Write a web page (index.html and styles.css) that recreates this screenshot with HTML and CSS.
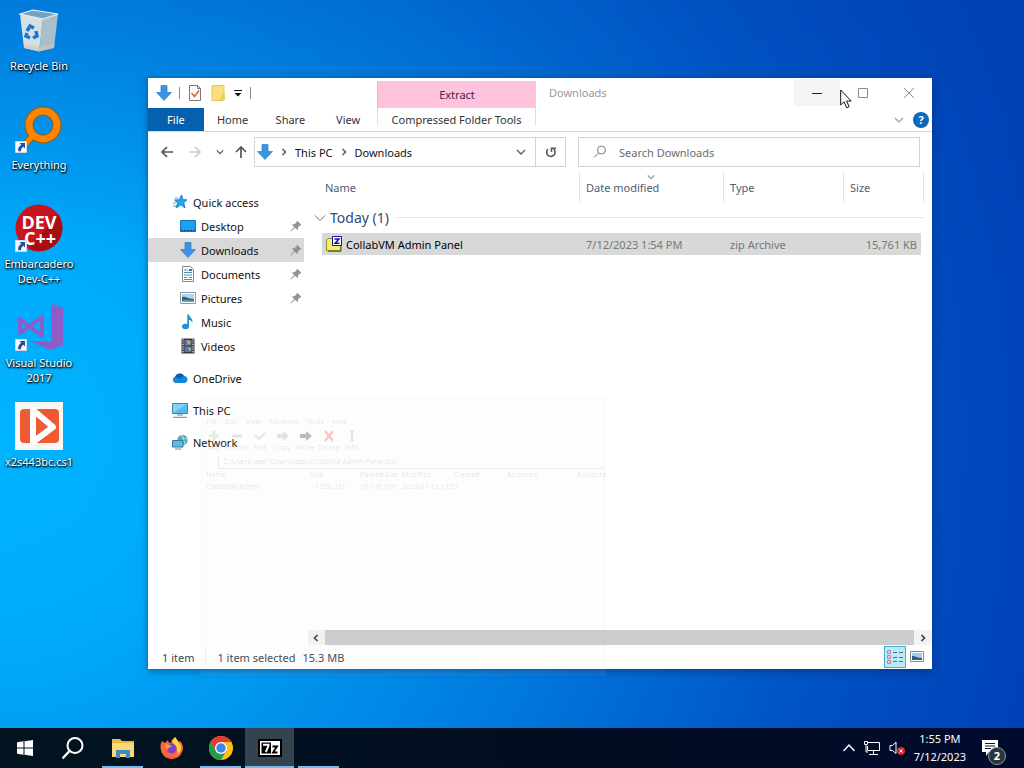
FILE: index.html
```html
<!DOCTYPE html>
<html lang="en">
<head>
<meta charset="utf-8">
<meta name="viewport" content="width=device-width, initial-scale=1">
<title>Downloads</title>
<link rel="stylesheet" href="styles.css">
</head>
<body>
<svg class="sprite" aria-hidden="true">
  <symbol id="arrow-down" viewBox="0 0 16 16"><path d="M5 .5h6v7h4.500L8 15.500.500 7.500H5z" fill="#3b94e3" stroke="#2a7dc8" stroke-width=".7"/></symbol>
  <symbol id="pin" viewBox="0 0 12 12"><path d="M7 .5 11.500 5l-1.500.5-2 2-.2 2.800L5 7.800.8 11.500l-.4-.4L4.200 7 1.700 4.500l2.800-.3 2-2z" fill="#8d9499"/></symbol>
  <symbol id="picture" viewBox="0 0 16 12"><path d="M.5.5h15v11H.5z" fill="#fff" stroke="#8c9aa5"/><path d="M2 2h12v8H2z" fill="#aed5ef"/><path d="M2 5c4-1 5 2 12 2v3H2z" fill="#33627a"/><path d="M2 8.500c4-1 8 0 12 0V10H2z" fill="#6f9fb8"/></symbol>
  <symbol id="shortcut" viewBox="0 0 12 12"><path d="M.5.5h11v11H.5z" fill="#f7f9fc" stroke="#cfd8e2"/><path d="M4.500 2h5.500v5.500L8.300 5.800C6.500 7 6 8.200 6 10.300H3.200C2.700 7.500 4 5.300 6.300 3.800z" fill="#244f9c"/></symbol>
  <symbol id="chev-down" viewBox="0 0 10 10"><path d="M1 3l4 4 4-4" fill="none" stroke="currentColor" stroke-width="1.500"/></symbol>
  <symbol id="chev-right" viewBox="0 0 10 10"><path d="M3.500 2 6.500 5 3.500 8" fill="none" stroke="currentColor" stroke-width="1.700"/></symbol>
  <symbol id="arrow-left" viewBox="0 0 14 14"><path d="M13 7H2M7 2 2 7l5 5" fill="none" stroke="currentColor" stroke-width="1.700"/></symbol>
</svg>

<main class="desktop">
  <nav class="shortcuts" aria-label="Desktop">
    <a class="shortcut" href="#">
      <svg class="shortcut-icon" viewBox="0 0 48 48"><path d="m5 8 23 5-4 32.500L9 42z" fill="#d8dfe3"/><path d="m28 13 15-5-4 34-15 3.500z" fill="#a9bfcc"/><path d="m5 8 13-4 25 4-15 5z" fill="#6fa3bf" stroke="#eaf3f7" stroke-width="1.200"/><path d="m9 38 .3 4L24 45.500l15-3.500.4-4L25 41z" fill="#cfc8c0" opacity=".6"/><g fill="none" stroke="#1f78cf" stroke-width="3.500"><path d="m12 25 3-5 4 2M21 25l1 5-4 2M15 32l-4-2 1-3"/></g></svg>
      <span>Recycle Bin</span></a>
    <a class="shortcut" href="#">
      <svg class="shortcut-icon" viewBox="0 0 48 48"><path d="M19 29 8 42" stroke="#8f5a1d" stroke-width="7"/><circle cx="28" cy="20" r="14" fill="none" stroke="#8f5a1d" stroke-width="9"/><path d="M20 28 8 42" stroke="#ff8500" stroke-width="5"/><circle cx="28" cy="20" r="14" fill="none" stroke="#ff8500" stroke-width="7"/><use href="#shortcut" x="0" y="36" width="12" height="12"/></svg>
      <span>Everything</span></a>
    <a class="shortcut" href="#">
      <svg class="shortcut-icon" viewBox="0 0 48 48"><circle cx="24" cy="24" r="23.500" fill="#c8141c"/><path d="M43 10a23.500 23.500 0 0 1-29 35z" fill="#a80d14"/><g class="dev-text"><text x="24" y="25" text-anchor="middle">DEV</text><text x="25" y="41" text-anchor="middle">C++</text></g><use href="#shortcut" x="0" y="36" width="12" height="12"/></svg>
      <span>Embarcadero Dev-C++</span></a>
    <a class="shortcut" href="#">
      <svg class="shortcut-icon" viewBox="0 0 48 48"><path d="m36 1 12 4v37l-12 5-22-9 22 1z" fill="#8e5bc8"/><path d="M5 16v14L27 14v19z" fill="none" stroke="#8e5bc8" stroke-width="4" stroke-linejoin="round"/><use href="#shortcut" x="0" y="36" width="12" height="12"/></svg>
      <span>Visual Studio 2017</span></a>
    <a class="shortcut" href="#">
      <svg class="shortcut-icon" viewBox="0 0 48 48"><path d="M0 0h48v48H0z" fill="#f8f7f5"/><rect x="5" y="7" width="39" height="34" rx="4" fill="#ee5a34"/><path d="M18 8v32L38 25z" fill="#ee5a34" stroke="#fff" stroke-width="6" stroke-linejoin="round"/></svg>
      <span>x2s443bc.cs1</span></a>
  </nav>

  <section class="window" aria-label="Downloads">
    <header class="ribbon">
      <div class="quick-tools">
        <svg class="i16"><use href="#arrow-down"/></svg><i class="rule"></i>
        <button class="plain" aria-label="Properties"><svg class="i16" viewBox="0 0 16 16"><path d="M2.500.500h8l3 3v12h-11z" fill="#fbfbfb" stroke="#777"/><path d="M10.500.500v3h3" fill="none" stroke="#777"/><path d="m4.500 8 3 3.500 4.500-6" fill="none" stroke="#dd6540" stroke-width="1.600"/></svg></button>
        <button class="plain" aria-label="New folder"><svg class="i16" viewBox="0 0 16 16"><path d="M2 .5h12v12l-1 3H2z" fill="#fbdf7c" stroke="#e8c65d"/><path d="M12 9h3v6h-5z" fill="#f1cc5c"/></svg></button>
        <button class="plain" aria-label="Customize toolbar"><svg class="i10" viewBox="0 0 10 10"><path d="M1 2.500h8" stroke="#111"/><path d="M1.500 5h7L5 8.500z" fill="#111"/></svg></button><i class="rule"></i>
      </div>
      <div class="context-title">Extract</div>
      <div class="caption"><h1>Downloads</h1>
        <button class="caption-button hovered" aria-label="Minimize"><svg class="i12" viewBox="0 0 12 12"><path d="M1 6.500h10" stroke="#222"/></svg></button>
        <button class="caption-button" aria-label="Maximize"><svg class="i12" viewBox="0 0 12 12"><path d="M1.500 1.500h9v9h-9z" fill="none" stroke="#8b8b8b"/></svg></button>
        <button class="caption-button" aria-label="Close"><svg class="i12" viewBox="0 0 12 12"><path d="m1 1 10 10M11 1 1 11" stroke="#8b8b8b"/></svg></button>
      </div>
      <div class="tabs"><button class="tab file">File</button><button class="tab">Home</button><button class="tab">Share</button><button class="tab">View</button></div>
      <button class="tab context-tab">Compressed Folder Tools</button>
      <div class="ribbon-end">
        <button class="plain faint" aria-label="Expand the ribbon"><svg class="i10"><use href="#chev-down"/></svg></button>
        <button class="plain help" aria-label="Help">?</button>
      </div>
    </header>

    <div class="navbar">
      <div class="history">
        <button class="plain" aria-label="Back"><svg class="i14"><use href="#arrow-left"/></svg></button>
        <button class="plain flip disabled" aria-label="Forward"><svg class="i14"><use href="#arrow-left"/></svg></button>
        <button class="plain" aria-label="Recent locations"><svg class="i8"><use href="#chev-down"/></svg></button>
        <button class="plain up" aria-label="Up"><svg class="i14"><use href="#arrow-left"/></svg></button>
      </div>
      <div class="address">
        <svg class="i16"><use href="#arrow-down"/></svg>
        <svg class="i10"><use href="#chev-right"/></svg><a href="#">This PC</a>
        <svg class="i10"><use href="#chev-right"/></svg><a href="#">Downloads</a>
        <button class="plain drop" aria-label="Previous locations"><svg class="i10"><use href="#chev-down"/></svg></button>
        <button class="plain refresh" aria-label="Refresh"><svg class="i12" viewBox="0 0 12 12"><path d="M3 3.200A4.200 4.200 0 1 0 8.500 3M6.500 6V2.300H11" fill="none" stroke="currentColor" stroke-width="1.600"/></svg></button>
      </div>
      <label class="search"><svg class="i14" viewBox="0 0 14 14"><circle cx="8.500" cy="5" r="4" fill="none" stroke="#777"/><path d="M5.500 8 1 12.500" stroke="#777"/></svg><input type="search" placeholder="Search Downloads" aria-label="Search Downloads"></label>
    </div>

    <div class="body">
      <nav class="tree" aria-label="Folders">
        <div class="branch">
          <a class="node root" href="#"><svg class="i16" viewBox="0 0 16 16"><path d="m9.500 1 1.600 4.800H15l-3.300 2.900L13 14 8.900 10.800 4 14l1.700-5L2.500 6l4.800-.2z" fill="#2ea3ee" stroke="#1686cf"/><path d="M3 4h3M1 9h3M1 12h3" stroke="#55a9dc"/></svg>Quick access</a>
          <a class="node" href="#"><svg class="i16" viewBox="0 0 16 16"><path d="M.5 2.500h15v11H.5z" fill="#18a0f4" stroke="#1476b9"/><path d="M1 12.500h14" stroke="#0a4c7f" stroke-dasharray="2 1"/></svg>Desktop<svg class="pin"><use href="#pin"/></svg></a>
          <a class="node current" href="#"><svg class="i16"><use href="#arrow-down"/></svg>Downloads<svg class="pin"><use href="#pin"/></svg></a>
          <a class="node" href="#"><svg class="i16" viewBox="0 0 16 16"><path d="M2.500.500h8l3 3v12h-11z" fill="#fff" stroke="#7c8a92"/><path d="M4 4h4M4 6.500h8M4 9h8M4 11.500h3M9 11.500h3M4 13.500h8" stroke="#4795a8"/><path d="M9 4h3" stroke="#2e6f9c" stroke-width="2"/></svg>Documents<svg class="pin"><use href="#pin"/></svg></a>
          <a class="node" href="#"><svg class="i16"><use href="#picture"/></svg>Pictures<svg class="pin"><use href="#pin"/></svg></a>
          <a class="node" href="#"><svg class="i16" viewBox="0 0 16 16"><ellipse cx="5.500" cy="12.500" rx="3.500" ry="2.800" fill="#1e93d2"/><path d="M7.300.5H9c.3 3 4.500 4 3.200 8.500C11.500 6.500 10 6 9 6v6.500H7.300z" fill="#1e93d2"/></svg>Music</a>
          <a class="node" href="#"><svg class="i16" viewBox="0 0 16 16"><path d="M1.500.5h13v15h-13z" fill="#333b45"/><path d="M3 1v14M13 1v14" stroke="#e4e8ea" stroke-width="1.300" stroke-dasharray="1.200 1.200"/><path d="M4.500 2h7v5.500h-7z" fill="#6a70a8"/><path d="M4.500 8.500h7V14h-7z" fill="#5c70ae"/><path d="m7 2 4 2-3 3zM8 9l3.500 2-2 2z" fill="#c2c33d"/></svg>Videos</a>
        </div>
        <a class="node root" href="#"><svg class="i16" viewBox="0 0 16 16"><path d="M3.500 13A3.200 3.200 0 0 1 3 6.800 5 5 0 0 1 12 6a3.600 3.600 0 0 1 1 7z" fill="#1288dc"/><path d="M3 6.800A5 5 0 0 1 12 6L7.500 9z" fill="#0b5fae"/></svg>OneDrive</a>
        <a class="node root" href="#"><svg class="i16" viewBox="0 0 16 16"><path d="M.5 1.500h15v10H.5z" fill="#52bdf0" stroke="#477f9e"/><path d="m1 2h14L1 11z" fill="#82d4f7"/><path d="M5 13h6M1 15.300h14" stroke="#6e8591"/></svg>This PC</a>
        <a class="node root" href="#"><svg class="i16" viewBox="0 0 16 16"><circle cx="10.500" cy="6" r="5.200" fill="#5aa5c6"/><path d="M9 1c2 2 2 4 6 4M10 1l3 9" stroke="#b8e4d5" fill="none"/><path d="M.5 6.500h10.500v6.500H.5z" fill="#56bdec" stroke="#3d7795"/><path d="M3 15h6" stroke="#6e8591"/></svg>Network</a>
      </nav>

      <div class="content">
        <table class="files">
          <colgroup><col class="c-name"><col class="c-date"><col class="c-type"><col></colgroup>
          <thead><tr><th scope="col">Name</th><th scope="col" class="sorted">Date modified<svg class="sort-mark i8"><use href="#chev-down"/></svg></th><th scope="col">Type</th><th scope="col">Size</th></tr></thead>
          <tbody>
            <tr><th class="group" colspan="4" scope="rowgroup"><div class="group-line"><svg class="i12" viewBox="0 0 12 12"><path d="m1 3.500 5 5 5-5" fill="none" stroke="#666"/></svg>Today (1)</div></th></tr>
            <tr class="selected"><td><div class="file-name"><svg class="i16" viewBox="0 0 16 16"><path d="M.5 4.500 2 2.500h5v2h7.500v10H.5z" fill="#f3f16a" stroke="#8d8d2c"/><path d="M2 15.300h13V5" fill="none" stroke="#555"/><path d="M6.500.500h9v9h-9z" fill="#fff" stroke="#1414a0"/><path d="M8.500 3h4.500L9 7.300h4.500" fill="none" stroke="#1414a0" stroke-width="1.500"/></svg>CollabVM Admin Panel</div></td><td>7/12/2023 1:54 PM</td><td>zip Archive</td><td>15,761 KB</td></tr>
          </tbody>
        </table>
        <div class="scrollbar"><button class="plain flip" aria-label="Scroll left"><svg class="i10"><use href="#chev-right"/></svg></button><div class="thumb"></div><button class="plain" aria-label="Scroll right"><svg class="i10"><use href="#chev-right"/></svg></button></div>
      </div>
    </div>

    <footer class="status"><span class="count">1 item</span><span>1 item selected</span><span class="bytes">15.3 MB</span>
      <button class="view chosen" aria-label="Details view"><svg class="i16" viewBox="0 0 16 16"><path d="M.5 1.500h3v3h-3zM.5 6.500h3v3h-3zM.5 11.500h3v3h-3z" fill="#fff" stroke="#a58ba5"/><path d="M1.500 3h1M1.500 8h1M1.500 13h1" stroke="#c33"/><path d="M6 3.500h4M12 3.500h4M6 8.500h4M12 8.500h4M6 12.500h4M12 12.500h4" stroke="#667"/></svg></button>
      <button class="view" aria-label="Large icons view"><svg class="i14" viewBox="0 0 14 12"><path d="M.5.5h13v10H.5z" fill="#fff" stroke="#7d8a94"/><path d="M2 2h10v7H2z" fill="#9ccdec"/><path d="M2 5c4 0 5 2 10 2v2H2z" fill="#2f5f78"/></svg></button>
    </footer>
  </section>

  <section class="fading" aria-label="Archive">
    <div class="fading-menu"><span>File</span><span>Edit</span><span>View</span><span>Favorites</span><span>Tools</span><span>Help</span></div>
    <div class="fading-tools">
      <span><svg class="i12" viewBox="0 0 12 12"><path d="M6 1v10M1 6h10" stroke="#2b9b2b" stroke-width="3"/></svg>Add</span>
      <span><svg class="i12" viewBox="0 0 12 12"><path d="M1 6h10" stroke="#347" stroke-width="3"/></svg>Extract</span>
      <span><svg class="i12" viewBox="0 0 12 12"><path d="m1 5 4 4 6-6" fill="none" stroke="#276" stroke-width="2"/></svg>Test</span>
      <span><svg class="i12" viewBox="0 0 12 12"><path d="M0 4h6V1l6 5-6 5V8H0z" fill="#333"/></svg>Copy</span>
      <span><svg class="i12 mid" viewBox="0 0 12 12"><path d="M0 4h6V1l6 5-6 5V8H0z"/></svg>Move</span>
      <span><svg class="i12 strong" viewBox="0 0 12 12"><path d="m2 1 8 10M10 1 2 11" stroke="#f22" stroke-width="2.500"/></svg>Delete</span>
      <span><svg class="i12" viewBox="0 0 12 12"><path d="M4 1.500h4M4 10.500h4M6 2v8" stroke="#433" stroke-width="2"/></svg>Info</span>
    </div>
    <div class="fading-path">C:\Users\user\Downloads\CollabVM Admin Panel.zip\</div>
    <div class="fading-row"><span>Name</span><span>Size</span><span>Packed Size</span><span>Modified</span><span>Created</span><span>Accessed</span><span>Attribute</span></div>
    <div class="fading-row"><span>CollabVM Admin</span><span>17 250 231</span><span>16 139 109</span><span>2023-07-12 13:51</span></div>
  </section>
</main>

<footer class="taskbar">
  <button class="task" aria-label="Start"><svg class="i16" viewBox="0 0 16 16"><path d="M0 2.200 6.500 1.300V7.500H0zM7.500 1.200 16 0v7.500H7.500zM0 8.500h6.500v6.200L0 13.800zM7.500 8.500H16V16l-8.500-1.200z" fill="#fff"/></svg></button>
  <button class="task" aria-label="Search"><svg class="i24" viewBox="0 0 24 24"><circle cx="13" cy="9.500" r="7.500" fill="none" stroke="#fff" stroke-width="2"/><path d="m7.500 15-7 7.500" stroke="#fff" stroke-width="2.300"/></svg></button>
  <button class="task open" aria-label="File Explorer"><svg class="i24" viewBox="0 0 24 24"><path d="M1 3h8l2 2h12v16H1z" fill="#e9b94b"/><path d="M1 7h22v14H1z" fill="#fbd874"/><path d="M5 14h14v8h-4v-4H9v4H5z" fill="#3a8cc8"/></svg></button>
  <button class="task" aria-label="Firefox"><svg class="i24" viewBox="0 0 24 24"><path d="M2 5c1 1 2 1 3 2l3-3c0 2 1 3 3 3l1-3 3-3c2 2 3 4 4 5l1-1c3 3 4 7 2 11a11 11 0 0 1-20 1C0 13 0 8 2 5z" fill="#ff6636"/><path d="m15 1 4 6c4 4 2 9-2 12 2-8-4-11-5-14z" fill="#ffd33c"/><path d="M2 12c2 11 14 12 19 6-5 7-17 5-19-6z" fill="#ed2667"/><circle cx="11.500" cy="12.500" r="5" fill="#7a3ed8"/><path d="M5 9c3-1 5 0 7 1-2 2-4 1-4 4-2-1-3-2-3-5z" fill="#ff9b2c"/></svg></button>
  <button class="task open" aria-label="Chrome"><svg class="i24" viewBox="0 0 24 24"><circle cx="12" cy="12" r="12" fill="#fbc116"/><path d="M1.600 6A12 12 0 0 1 22.400 6H12L6.800 15z" fill="#e33b2e"/><path d="M1.600 6A12 12 0 0 0 12 24l5.200-9H6.800z" fill="#229b4a"/><circle cx="12" cy="12" r="6" fill="#fff"/><circle cx="12" cy="12" r="4.700" fill="#3f83ee"/></svg></button>
  <button class="task open active" aria-label="7-Zip"><svg class="i24" viewBox="0 0 24 24"><path d="M0 3h24v18H0z" fill="#000"/><path d="M2 5h20v14H2z" fill="#fff"/><path d="M3.500 6.500H13v11H3.500z" fill="#000"/><path d="M5 8.800h5.500v1L7.800 16" fill="none" stroke="#fff" stroke-width="2"/><path d="M14.500 10.500h4.500l-4 6h4.500" fill="none" stroke="#000" stroke-width="1.800"/></svg></button>
  <button class="task open" aria-label="Window"></button>
  <div class="tray">
    <button class="plain" aria-label="Show hidden icons"><svg class="i12" viewBox="0 0 12 12"><path d="m.5 9 5.500-6 5.500 6" fill="none" stroke="#fff" stroke-width="1.500"/></svg></button>
    <svg class="i16" viewBox="0 0 16 16"><path d="M4 2.500h11.500v8H3.500V6M9.500 11v3M5 14.500h9M.5 1.500h3v3h-3zM2 5v7h2" fill="none" stroke="#fff"/></svg>
    <svg class="i16" viewBox="0 0 16 16"><path d="M1 5.500h2.500L7 2v11.500L3.500 10.500H1z" fill="none" stroke="#fff"/><circle cx="12" cy="11" r="4" fill="#d8292f"/><path d="m10.500 9.500 3 3M13.500 9.500l-3 3" stroke="#fff"/></svg>
    <time class="clock"><span>1:55 PM</span><span>7/12/2023</span></time>
    <button class="notes" aria-label="Notifications"><svg class="i16" viewBox="0 0 16 16"><path d="M0 0h16v12H7l-3 4v-4H0z" fill="#fff"/><path d="M3 3.500h10M3 6h10M3 8.500h6" stroke="#0a1533"/></svg><span class="badge">2</span></button>
  </div>
</footer>
<svg class="pointer" viewBox="0 0 12 20" aria-hidden="true"><path d="M.7 1v15l3.400-3.200 2.600 6 2.500-1.100-2.600-5.700h4.600z" fill="#fff" stroke="#111"/></svg>
</body>
</html>
```
FILE: styles.css
```css
* { box-sizing: border-box; }
body {
  margin: 0;
  min-height: 100vh;
  display: grid;
  grid-template-rows: 1fr 40px;
  overflow: hidden;
  font: 11px/15px "Noto Sans", "Open Sans", sans-serif;
  color: #111;
}
a { color: inherit; text-decoration: none; }
button, input { font: inherit; color: inherit; }
button { border: 0; padding: 0; background: none; display: flex; align-items: center; justify-content: center; }
svg { flex: none; }
.sprite { position: absolute; width: 0; height: 0; }
.i8 { width: 8px; height: 8px; }
.i10 { width: 10px; height: 10px; }
.i12 { width: 12px; height: 12px; }
.i14 { width: 14px; height: 14px; }
.i16 { width: 16px; height: 16px; }
.i24 { width: 24px; height: 24px; }

.desktop {
  position: relative;
  background:
    linear-gradient(to bottom, rgba(0, 70, 180, .25), rgba(0, 70, 180, 0) 35%),
    radial-gradient(ellipse 105% 150% at 0 60%, #00b4ff 0, #00a9fa 20%, #0081e2 48%, #0055c6 76%, #003fb6 100%);
}
.shortcuts { display: grid; grid-auto-rows: 99px; width: 78px; padding-top: 6px; }
.shortcut {
  display: flex; flex-direction: column; align-items: center; gap: 4px;
  color: #fff; text-align: center;
  text-shadow: 1px 1px 2px #000, 0 1px 2px #000;
}
.shortcut-icon { width: 48px; height: 48px; }
.dev-text { font: bold 18px "Open Sans", sans-serif; fill: #fff; text-shadow: none; }

.window {
  position: absolute;
  inset: 78px 92px 59px 148px;
  display: grid;
  grid-template-rows: auto auto 1fr 24px;
  background: #fff;
  box-shadow: 0 0 1px #0a5a9c, 0 2px 8px rgba(0, 20, 60, .4);
}
.ribbon {
  display: grid;
  grid-template-columns: 229px 159px 1fr;
  grid-template-rows: 30px 23px;
  border-bottom: 1px solid #d9dadb;
}
.quick-tools { display: flex; align-items: center; padding-left: 8px; gap: 7px; }
.rule { width: 1px; height: 12px; background: #888; }
.plain { flex: none; }
.context-title { margin-top: 3px; background: #ffc2dc; display: grid; place-items: center; border-left: 1px solid #eab6cc; color: #4c2438; }
.caption { display: flex; align-items: flex-start; }
.caption h1 { flex: 1; margin: 0; padding: 7px 0 0 13px; font-size: 11px; font-weight: 400; color: #999; }
.caption-button { width: 46px; height: 27px; margin-top: 1px; }
.caption-button.hovered { background: #f4f4f4; }
.tabs { display: flex; }
.tab { width: 58px; color: #333; }
.tab.file { width: 56px; background: #0561b0; color: #fff; }
.context-tab { width: 100%; border: solid #ddd; border-width: 0 1px; margin-bottom: 6px; padding-top: 6px; }
.ribbon-end { display: flex; align-items: center; justify-content: flex-end; gap: 9px; padding-right: 3px; }
.faint { color: #aaa; }
.help { width: 16px; height: 16px; border-radius: 8px; background: #0b69b7; color: #fff; font-weight: 700; }

.navbar { display: grid; grid-template-columns: 106px minmax(0, 312px) minmax(0, 1fr); height: 40px; padding: 5px 12px 5px 0; }
.history { display: flex; align-items: center; gap: 14px; padding-left: 12px; color: #555; }
.history .up { transform: rotate(90deg); margin-left: -4px; }
.flip { transform: scaleX(-1); }
.disabled { color: #ccc; }
.address { display: flex; align-items: center; border: 1px solid #d5d5d5; padding-left: 2px; gap: 6px; color: #111; }
.address > svg + svg, .address a + svg { color: #666; }
.drop { margin-left: auto; margin-right: 3px; color: #666; }
.refresh { width: 30px; height: 100%; border-left: 1px solid #d5d5d5; color: #555; }
.search { display: flex; align-items: center; gap: 12px; margin-left: 12px; padding-left: 14px; border: 1px solid #d5d5d5; }
.search input { flex: 1; min-width: 0; border: 0; outline: 0; padding: 0; background: none; }
.search input::placeholder { color: #6b6b6b; opacity: 1; }

.body { display: grid; grid-template-columns: 160px minmax(0, 1fr); }
.tree { display: flex; flex-direction: column; gap: 8px; padding: 18px 4px 0 0; }
.node { display: flex; align-items: center; height: 24px; gap: 5px; padding: 0 2px 0 32px; }
.node.root { padding-left: 24px; }
.node.current { background: #d9d9d9; }
.pin { width: 12px; height: 12px; margin-left: auto; }
.content { display: flex; flex-direction: column; justify-content: space-between; }
.files { table-layout: fixed; width: calc(100% - 8px); border-spacing: 0; color: #777; }
.c-name { width: 272px; }
.c-date { width: 144px; }
.c-type { width: 120px; }
.files th { text-align: left; font-weight: 400; padding: 0 6px; color: #4f5d70; }
.files thead th { height: 30px; border-right: 1px solid #e5e5e5; }
.files thead th:first-child { padding-left: 17px; }
.sorted { position: relative; }
.sort-mark { position: absolute; top: 1px; left: 67px; color: #8a93a0; }
.files .group { height: 31px; color: #34487c; font-size: 14px; line-height: 20px; padding-right: 0; }
.group-line { display: flex; align-items: center; gap: 4px; }
.group-line::after { content: ""; flex: 1; height: 1px; margin-left: 4px; background: #e2e2e2; }
.selected td { height: 22px; padding: 0 6px; background: #d8d8d8 padding-box; }
.selected td:first-child { border-left: 14px solid transparent; padding-left: 4px; color: #000; }
.selected td:last-child { border-right: 3px solid transparent; padding-right: 4px; text-align: right; }
.file-name { display: flex; align-items: center; gap: 4px; }
.scrollbar { display: flex; align-items: center; height: 15px; gap: 4px; padding: 0 4px 0 3px; background: #f3f3f3; color: #444; }
.thumb { flex: 1; height: 15px; background: #cdcdcd; }

.status { display: flex; align-items: center; padding-left: 14px; color: #3b4656; }
.count { padding-right: 11px; margin-right: 11px; border-right: 1px solid #eee; }
.bytes { margin-left: 7px; margin-right: auto; }
.view { width: 22px; height: 22px; }
.view:last-child { margin-right: 4px; }
.view.chosen { background: #b9eaf7; border: 1px solid #49acc8; }

.fading {
  position: absolute;
  inset: 396px 419px 52px 201px;
  pointer-events: none;
  background: rgba(225, 228, 228, .06);
  border: 1px solid rgba(120, 120, 120, .04);
  padding-top: 19px;
  font-size: 7px;
  line-height: 12px;
  color: rgba(0, 0, 0, .13);
}
.fading-menu { display: flex; gap: 8px; padding: 0 4px; }
.fading-tools { display: grid; grid-template-columns: repeat(7, 23px); text-align: center; }
.fading-tools span { display: flex; flex-direction: column; align-items: center; line-height: 11px; }
.fading-tools svg { opacity: .12; margin-top: 2px; }
.fading-tools .mid { opacity: .25; }
.fading-tools .strong { opacity: .25; }
.fading-path { margin: 3px 0 0 16px; padding-left: 4px; border-left: 1px solid rgba(0, 0, 0, .07); border-bottom: 1px solid rgba(0, 0, 0, .07); }
.fading-row { display: grid; grid-template-columns: 104px 50px 42px 52px 53px 70px 1fr; padding: 0 4px; white-space: nowrap; }

.taskbar { display: flex; background: linear-gradient(to right, #021420, #010d22 60%, #010b2d); color: #fff; }
.task { width: 49px; position: relative; }
.task.open::after { content: ""; position: absolute; inset: auto 4px 0; height: 2px; background: #76b9ed; }
.task.active { background: #34444f; }
.task.active::after { inset: auto 0 0; }
.tray { display: flex; align-items: center; margin-left: auto; gap: 9px; padding-right: 18px; }
.clock { display: grid; line-height: 18px; text-align: center; }
.notes { position: relative; width: 24px; height: 24px; margin-left: 7px; justify-content: flex-start; }
.badge { position: absolute; right: 0; bottom: -5px; width: 18px; height: 18px; border-radius: 9px; border: 1px solid #9098a0; background: #2b343b; font-weight: 700; line-height: 16px; }
.pointer { position: absolute; top: 89px; left: 840px; width: 12px; height: 20px; }
```
